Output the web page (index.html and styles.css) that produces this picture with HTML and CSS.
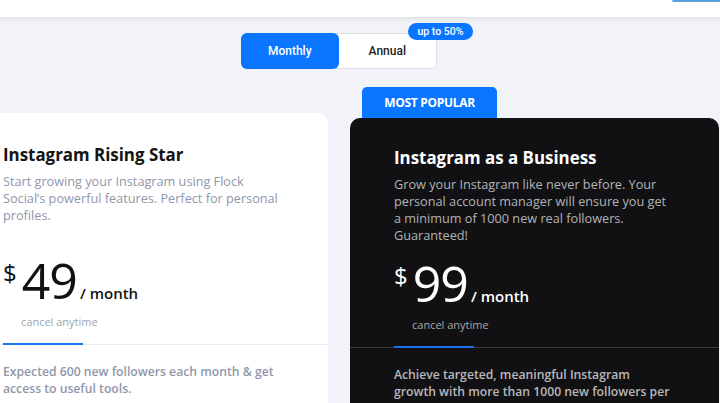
FILE: index.html
```html
<!DOCTYPE html>
<html lang="en">
<head>
<meta charset="utf-8">
<title>Pricing</title>
<link rel="stylesheet" href="styles.css">
</head>
<body>
<header class="topbar">
  <span class="topbar-btn"></span>
</header>
<main class="pricing">
  <div class="toggle-row">
    <div class="toggle">
      <button class="toggle-opt active">Monthly</button>
      <button class="toggle-opt">Annual</button>
      <span class="badge">up to 50%</span>
    </div>
  </div>
  <div class="plans">
    <section class="plan plan-light">
      <div class="card">
        <h2 class="plan-title">Instagram Rising Star</h2>
        <p class="plan-desc">Start growing your Instagram using Flock<br>Social’s powerful features. Perfect for personal<br>profiles.</p>
        <div class="price"><span class="cur">$</span><span class="amount">49</span><span class="per">/ month</span></div>
        <div class="cancel">cancel anytime</div>
        <div class="divider"></div>
        <p class="plan-note">Expected 600 new followers each month &amp; get<br>access to useful tools.</p>
      </div>
    </section>
    <section class="plan plan-dark">
      <div class="tab">MOST POPULAR</div>
      <div class="card">
        <h2 class="plan-title">Instagram as a Business</h2>
        <p class="plan-desc">Grow your Instagram like never before. Your<br>personal account manager will ensure you get<br>a minimum of 1000 new real followers.<br>Guaranteed!</p>
        <div class="price"><span class="cur">$</span><span class="amount">99</span><span class="per">/ month</span></div>
        <div class="cancel">cancel anytime</div>
        <div class="divider"></div>
        <p class="plan-note">Achieve targeted, meaningful Instagram<br>growth with more than 1000 new followers per</p>
      </div>
    </section>
  </div>
</main>
</body>
</html>
```
FILE: styles.css
```css
* { box-sizing: border-box; }
html, body { margin: 0; padding: 0; }
body {
  background: #f1f3f8;
  font-family: "Open Sans", "Liberation Sans", sans-serif;
  overflow: hidden;
  width: 720px;
  height: 403px;
}
.topbar {
  height: 17px;
  background: #ffffff;
  box-shadow: 0 2px 5px rgba(0, 0, 0, 0.08);
  display: flex;
  justify-content: flex-end;
  position: relative;
  z-index: 2;
}
.topbar-btn {
  display: block;
  width: 48px;
  height: 2px;
  background: #5b9fd9;
  border-radius: 0 0 0 3px;
}
.pricing {
  margin-left: -41px;
  width: 760px;
}
.toggle-row {
  display: flex;
  justify-content: center;
  padding-top: 16px;
}
.toggle {
  position: relative;
  display: flex;
  width: 196px;
  height: 36px;
  background: #ffffff;
  border: 1px solid #dde0e6;
  border-radius: 6px;
}
.toggle-opt {
  flex: 1;
  border: 0;
  margin: -1px 0 -1px -1px;
  background: transparent;
  font-family: Roboto, "Liberation Sans", sans-serif;
  font-weight: 500;
  font-size: 12px;
  color: #222;
  border-radius: 6px;
  padding: 0;
}
.toggle-opt + .toggle-opt { margin-left: 0; }
.toggle-opt.active {
  background: #0a75ff;
  color: #ffffff;
}
.badge {
  position: absolute;
  top: -11px;
  right: -37px;
  height: 17px;
  width: 65px;
  border-radius: 9px;
  background: #0a75ff;
  color: #fff;
  font-family: Roboto, "Liberation Sans", sans-serif;
  font-weight: 500;
  font-size: 10.5px;
  line-height: 17px;
  text-align: center;
}
.plans {
  display: flex;
  gap: 22px;
  margin-top: 18px;
  align-items: flex-start;
}
.plan { width: 369px; flex: none; }
.plan-light { padding-top: 26px; }
.card {
  border-radius: 10px;
  padding-top: 30px;
  height: 320px;
}
.plan-light .card { background: #ffffff; }
.plan-dark .card { background: #111114; padding-top: 28px; }
.tab {
  margin-left: 12px;
  width: 135px;
  height: 31px;
  background: #0a75ff;
  color: #fff;
  border-radius: 5px 5px 0 0;
  font-weight: 700;
  font-size: 12px;
  line-height: 31px;
  text-align: center;
  letter-spacing: -0.3px;
}
.plan-title {
  margin: 0;
  padding-left: 44px;
  font-size: 16.9px;
  line-height: 24px;
  font-weight: 700;
  color: #141414;
}
.plan-dark .plan-title { color: #ffffff; }
.plan-desc {
  margin: 6px 0 0;
  padding-left: 44px;
  font-size: 12.7px;
  line-height: 17px;
  color: #8f97ab;
  min-height: 68px;
  white-space: nowrap;
}
.plan-dark .plan-desc { color: #b3b3b5; }
.price {
  display: flex;
  align-items: baseline;
  padding-left: 44px;
  margin-top: 14px;
  color: #111;
  line-height: 1;
}
.plan-dark .price { color: #fff; }
.cur {
  font-size: 24px;
  align-self: flex-start;
  margin-top: 6px;
  margin-right: 5px;
}
.amount {
  font-size: 50px;
  font-weight: 500;
  letter-spacing: -1px;
}
.per {
  font-size: 15px;
  font-weight: 600;
  margin-left: 3px;
}
.cancel {
  padding-left: 62px;
  margin-top: 9px;
  font-size: 11px;
  line-height: 16px;
  color: #9da3b3;
}
.plan-dark .cancel { color: #a8a8ab; }
.divider {
  position: relative;
  margin-top: 14px;
  height: 1px;
  background: #e9ebef;
}
.plan-dark .divider { background: #3a3a3d; }
.divider::before {
  content: "";
  position: absolute;
  left: 44px;
  top: -1px;
  width: 80px;
  height: 2px;
  background: #1a73e8;
}
.plan-note {
  margin: 18px 0 0;
  padding-left: 44px;
  font-size: 12.2px;
  line-height: 17px;
  font-weight: 600;
  color: #8f97ab;
  white-space: nowrap;
}
.plan-dark .plan-note { color: #b8b8ba; }
```
